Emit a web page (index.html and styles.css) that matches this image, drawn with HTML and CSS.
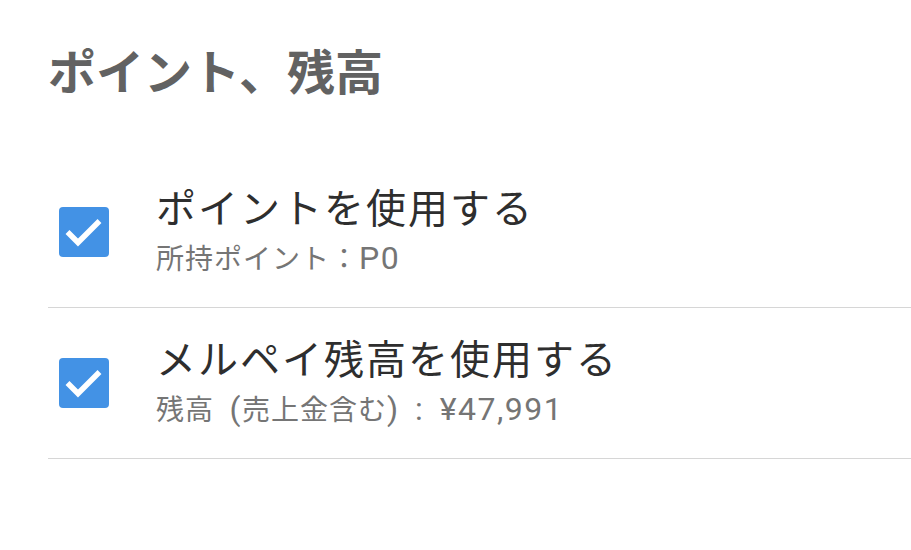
FILE: index.html
```html
<!DOCTYPE html>
<html lang="ja">
<head>
<meta charset="utf-8">
<link rel="stylesheet" href="styles.css">
</head>
<body>
<main class="section">
  <h1 class="heading">ポイント、残高</h1>
  <ul class="options">
    <li class="option">
      <span class="check">
        <svg viewBox="0 0 50 50" width="50" height="50"><path d="M8.5 25 L19 35.5 L40.5 14" fill="none" stroke="#fff" stroke-width="5.5" stroke-linecap="butt" stroke-linejoin="miter"/></svg>
      </span>
      <div class="text">
        <div class="title">ポイントを使用する</div>
        <div class="sub">所持ポイント：<span class="lat">P0</span></div>
      </div>
    </li>
    <li class="option">
      <span class="check">
        <svg viewBox="0 0 50 50" width="50" height="50"><path d="M8.5 25 L19 35.5 L40.5 14" fill="none" stroke="#fff" stroke-width="5.5" stroke-linecap="butt" stroke-linejoin="miter"/></svg>
      </span>
      <div class="text">
        <div class="title">メルペイ残高を使用する</div>
        <div class="sub">残高<span class="lat"> (</span>売上金含む<span class="lat">) : ¥47,991</span></div>
      </div>
    </li>
  </ul>
</main>
</body>
</html>
```
FILE: styles.css
```css
html, body {
  margin: 0;
  padding: 0;
  background: #fff;
}
body {
  font-family: Roboto, "Noto Sans CJK JP", sans-serif;
}
.section {
  padding-left: 48px;
}
.heading {
  margin: 0;
  padding-top: 50px;
  font-size: 48px;
  line-height: 48px;
  font-weight: 700;
  color: #626262;
}
.options {
  list-style: none;
  margin: 59px 0 0;
  padding: 0;
}
.option {
  display: flex;
  align-items: center;
  height: 151px;
  box-sizing: border-box;
  border-bottom: 1px solid #d6d6d6;
}
.check {
  display: block;
  flex: none;
  width: 50px;
  height: 50px;
  margin-left: 11px;
  border-radius: 4px;
  background: #4392e5;
}
.check svg {
  display: block;
}
.text {
  margin-left: 47px;
  display: flex;
  flex-direction: column;
}
.title {
  font-size: 40px;
  line-height: 40px;
  letter-spacing: 2px;
  color: #2e2e2e;
}
.sub {
  margin-top: 13px;
  font-size: 28px;
  line-height: 30px;
  letter-spacing: 1px;
  color: #757575;
}
.lat {
  font-size: 32px;
  letter-spacing: 1.5px;
  word-spacing: 6px;
}
```
